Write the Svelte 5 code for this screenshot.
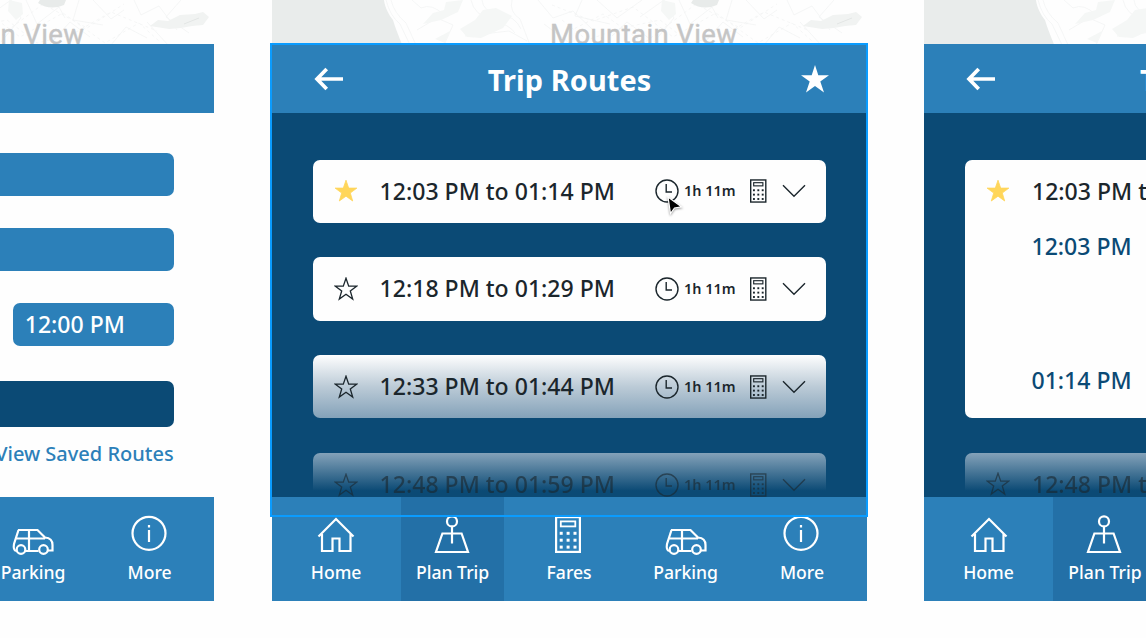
<script>
  const tabs = ['Home', 'Plan Trip', 'Fares', 'Parking', 'More'];
  const trips = [
    { time: '12:03 PM to 01:14 PM', saved: true },
    { time: '12:18 PM to 01:29 PM' },
    { time: '12:33 PM to 01:44 PM', tone: 'fade' },
    { time: '12:48 PM to 01:59 PM', tone: 'ghost' }
  ];
  const dots = [0, 1, 2].flatMap((r) => [0, 1, 2].map((c) => [c, r]));
</script>

{#snippet map()}
  <svg class="map" viewBox="0 0 595 44.4" preserveAspectRatio="none">
    <path fill="#e9eceb" d="M0 0H112C113 8 117 15 121 20C123 27 126 34 130 44.4H0Z" />
    <g fill="none" stroke="#f3f4f4" stroke-width=".8">
      <path d="M114 0Q118 16 128 24L138 45M119 0Q122 13 134 23L144 45M140 0L149 8Q160 3 172 15L184 8M199 0Q202 15 220 20T243 33M145 30L165 18L181 25L172 45M240 0Q237 12 248 19L258 45M210 0Q211 12 227 14T249 29M193 36L237 31L255 41M266 0L281 18L301 11L320 29M272 24L300 45M310 0L303 16L338 24M325 0L345 18L370 0M340 36L355 22L378 39M368 17L392 0L402 18L382 42M407 0L418 24L440 7L446 18M430 45L451 22L471 37M460 0L454 20L484 25M474 0L492 19L505 10M492 45L507 27L528 38M515 0L522 15L540 6L558 30M528 22L549 45M562 0L547 17L570 33" />
      <path stroke-dasharray="3 3" d="M280 5L321 21L361 7L401 37L444 13L486 43L520 23L540 41M292 34L331 14L372 43L424 4L468 28L505 4M290 20L315 40L350 28L388 20L418 43L452 35L492 12L538 31" />
    </g>
    <path fill="#f5f7f6" d="M151 24L161 13L172 10L174 2L191 0L186 12L169 20ZM188 29L203 20L211 10L224 8L240 16L231 28L209 38L195 37ZM390 0L403 3L404 14L397 20L389 11ZM163 39L178 31L173 43Z" />
    <path fill="#e8ebea" d="M421 0H447L445 5Q431 11 419 3Z" />
    <path fill="#f1f3f2" d="M531 26L539 20L549 21L561 15L576 14L584 12L590 17L584 25L573 26L562 28L550 29Z" />
    <path stroke="#e3e6e5" fill="none" d="M565 24L580 18" />
    <text x="278" y="43.8" textLength="187" lengthAdjust="spacing">Mountain View</text>
  </svg>
{/snippet}

{#snippet star(saved)}
  <svg class="star" class:saved viewBox="0 0 24 24">
    <path d="M12 1.2L14.7 9.1H22.9L16.3 14L18.7 22L12 17.2L5.3 22L7.7 14L1.1 9.1H9.3Z" />
  </svg>
{/snippet}

{#snippet calc(cls)}
  <svg class={cls} viewBox="0 0 26 37" fill="none" stroke="currentColor">
    <rect x="1.1" y="1.1" width="23.8" height="34.8" stroke-width="2.2" />
    <rect x="5.8" y="5.4" width="14.5" height="5" stroke-width="1.8" />
    {#each dots as [c, r]}
      <rect x={4.7 + c * 6.9} y={15.8 + r * 6.9} width="3" height="3" fill="currentColor" stroke="none" />
    {/each}
  </svg>
{/snippet}

{#snippet header()}
  <header>
    <svg class="back" viewBox="0 0 30 24" fill="none" stroke="#fff" stroke-width="3.7">
      <path d="M12.7 2L3 12L12.7 22M3 12H29" />
    </svg>
    <h1>Trip Routes</h1>
    <svg class="fav" viewBox="0 0 28 28"><path fill="#fff" d="M14 0L17.3 10.2H28L19.3 16.5L23 27.5L14 21.1L5 27.5L8.7 16.5L0 10.2H10.7Z" /></svg>
  </header>
{/snippet}

{#snippet tripRow(trip)}
  <div class="trip">
    {@render star(trip.saved)}
    <span class="time">{trip.time}</span>
    <svg class="clock" viewBox="0 0 24 24" fill="none" stroke="currentColor" stroke-width="1.4"><circle cx="12" cy="12" r="11" /><path d="M11.2 5V13H17" /></svg>
    <span class="dur">1h 11m</span>
    {@render calc('fare')}
    <svg class="chev" viewBox="0 0 24 14" fill="none" stroke="currentColor" stroke-width="1.4"><path d="M1 1.3L12 12.3L23 1.3" /></svg>
  </div>
{/snippet}

{#snippet nav(active)}
  <nav>
    {#each tabs as tab}
      <div class="tab" class:active={tab === active}>
        <div class="glyph">
          {#if tab === 'Home'}
            <svg width="38" height="38" viewBox="0 0 38 38"><path d="M1.5 21.5L19 4L36.5 21.5M5 19V36H15.5V23.5H22.5V36H33.5V19" /></svg>
          {:else if tab === 'Plan Trip'}
            <svg width="38" height="38" viewBox="0 0 38 38"><circle cx="18" cy="6.4" r="5" /><path d="M18 11.4V28.5M8.4 18.5H27.6L34 37H2Z" /></svg>
          {:else if tab === 'Fares'}
            {@render calc('big')}
          {:else if tab === 'Parking'}
            <svg width="42" height="38" viewBox="0 0 42 38"><path d="M6 15H25.5L33 22.5Q40.5 23 40.5 30V35.5H36M4 36Q1 35 2 29L6.5 15M4 23.5H33M17 15V36M13.5 36H26.5" /><circle cx="9" cy="34.5" r="4.3" /><circle cx="31.5" cy="34.5" r="4.3" /></svg>
          {:else}
            <svg width="36" height="38" viewBox="0 0 36 38"><circle cx="17" cy="18.3" r="16.5" /><path d="M17 15V27" /><path d="M17 10V12.5" /></svg>
          {/if}
        </div>
        <span>{tab}</span>
      </div>
    {/each}
  </nav>
{/snippet}

<main>
  <section class="screen planner">
    {@render map()}
    <header></header>
    <div class="form">
      <div class="field"></div>
      <div class="field"></div>
      <div class="field short">12:00 PM</div>
      <div class="submit"></div>
      <a href="#saved">View Saved Routes</a>
    </div>
    {@render nav()}
  </section>

  <section class="screen">
    {@render map()}
    {@render header()}
    <div class="list">
      {#each trips as trip}
        <div class="card {trip.tone}">{@render tripRow(trip)}</div>
      {/each}
    </div>
    {@render nav('Plan Trip')}
    <div class="selection"></div>
    <svg class="cursor" viewBox="0 0 18 20"><path d="M2 1L15.5 10.8L8.5 12L4.5 17.5Z" fill="#000" stroke="#fff" stroke-width="1.2" /></svg>
  </section>

  <section class="screen">
    {@render map()}
    {@render header()}
    <div class="list">
      <div class="card open">
        {@render tripRow(trips[0])}
        <span class="stop">12:03 PM</span>
        <span class="stop last">01:14 PM</span>
      </div>
      <div class="card ghost">{@render tripRow(trips[3])}</div>
    </div>
    {@render nav('Plan Trip')}
  </section>
</main>

<style>
  :global(body) { background: #fefefe; overflow: hidden; }
  main {
    width: 1146px; height: 638px; overflow: hidden;
    display: flex; gap: 57.4px; align-items: flex-start;
    font-family: 'Noto Sans', sans-serif; color: #1b262c;
  }
  .screen {
    position: relative; flex: 0 0 595px; height: 600.6px;
    display: flex; flex-direction: column;
  }
  .planner { margin-left: -380.8px; }
  .map { flex: 0 0 44.4px; width: 595px; height: 44.4px; overflow: hidden; display: block; }
  .map text { font: 27.5px Roboto, sans-serif; fill: #c5c5c5; stroke: #c5c5c5; stroke-width: .4; }
  header {
    flex: 0 0 69px; box-sizing: border-box; padding: 0 37.5px 0 42.5px; background: #2c80b9;
    display: flex; align-items: center; justify-content: space-between;
  }
  h1 { margin: 2px 6px 0 0; font-size: 28.9px; line-height: 38px; font-weight: 700; letter-spacing: .1px; color: #fff; white-space: nowrap; }
  .back { width: 30px; height: 24px; }
  .fav { width: 28px; height: 28px; margin-top: 1px; }
  .list {
    flex: 1; min-height: 0; overflow: hidden; padding: 46.2px 40.5px 0 41.5px; background: #0b4a75;
    display: flex; flex-direction: column; gap: 34.6px;
  }
  .card { flex: 0 0 63.2px; background: #fefefe; border-radius: 7px; }
  .fade { background: linear-gradient(#fefefe, #bccbd7 50%, #84a2b9); }
  .ghost { background: linear-gradient(#84a2b9, #0b4a75 60%); }
  .ghost .trip { opacity: .6; }
  .open { flex-basis: 258.6px; display: flex; flex-direction: column; }
  .trip { height: 63.2px; display: flex; align-items: center; white-space: nowrap; }
  .star { width: 24px; height: 24px; margin-left: 21px; fill: none; stroke: currentColor; stroke-width: 1.3; }
  .star.saved { fill: #ffd65a; stroke: #ffd65a; stroke-width: .8; }
  .time { width: 275.5px; margin-left: 21.5px; font-size: 23.05px; line-height: 31px; font-weight: 500; }
  .clock { width: 24px; height: 24px; }
  .dur { width: 66px; margin-left: 5px; font-size: 14.4px; line-height: 20px; font-weight: 600; }
  .fare { width: 16.5px; height: 24px; }
  .chev { width: 24px; height: 14px; margin-left: 15px; }
  .stop { margin: 8.5px 0 0 66px; font-size: 23.05px; line-height: 30px; font-weight: 500; color: #0b4a75; }
  .stop.last { margin-top: 104px; }
  .form { flex: 1; min-height: 0; padding: 40.1px 40.5px 0; display: flex; flex-direction: column; align-items: stretch; }
  .field {
    box-sizing: border-box; height: 43px; margin-bottom: 31.8px; padding-left: 12px; border-radius: 7px;
    background: #2c80b9; color: #fff; font-size: 23.05px; line-height: 42px; font-weight: 500;
  }
  .field.short { align-self: flex-end; width: 161px; margin-bottom: 34.5px; }
  .submit { height: 46px; border-radius: 7px; background: #0b4a75; }
  .form a { align-self: flex-end; margin-top: 13.5px; font-size: 20px; line-height: 28px; font-weight: 500; color: #2c80b9; text-decoration: none; }
  nav {
    flex: 0 0 103.6px; box-sizing: border-box; padding: 0 12.8px; background: #2c80b9;
    display: flex; justify-content: space-between;
  }
  .tab { width: 103.5px; display: flex; flex-direction: column; align-items: center; color: #fff; }
  .tab.active { background: #2370a7; }
  .tab span { margin-top: 6px; font-size: 17.6px; line-height: 26px; font-weight: 500; white-space: nowrap; }
  .glyph { margin-top: 18px; height: 38px; }
  .glyph svg { display: block; overflow: visible; fill: none; stroke: #fff; stroke-width: 2.2; }
  .glyph :global(.big) { width: 26px; height: 37px; margin: 1px 2px 0 0; }
  .selection { position: absolute; left: -1.5px; top: 43px; width: 594px; height: 470px; border: 2px solid #0a9cff; }
  .cursor { position: absolute; left: 394.5px; top: 196px; width: 18px; height: 20px; filter: drop-shadow(0 1px 1px #0006); }
</style>
